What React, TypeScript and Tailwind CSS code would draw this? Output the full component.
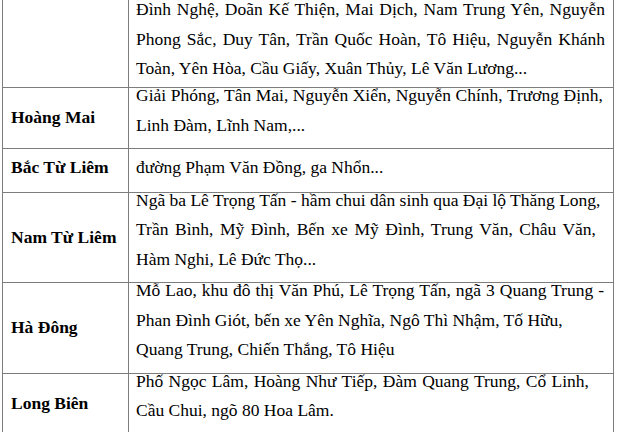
import React from "react";

type Line = { t: string; w?: string };
type Row = {
  name: string;
  lines: Line[];
  first?: boolean;
  single?: boolean;
};

const rows: Row[] = [
  {
    name: "",
    first: true,
    lines: [
      { t: "Đình Nghệ, Doãn Kế Thiện, Mai Dịch, Nam Trung Yên, Nguyễn", w: "w-[469px]" },
      { t: "Phong Sắc, Duy Tân, Trần Quốc Hoàn, Tô Hiệu, Nguyễn Khánh", w: "w-[469px]" },
      { t: "Toàn, Yên Hòa, Cầu Giấy, Xuân Thủy, Lê Văn Lương..." },
    ],
  },
  {
    name: "Hoàng Mai",
    lines: [
      { t: "Giải Phóng, Tân Mai, Nguyễn Xiển, Nguyễn Chính, Trương Định,", w: "w-[467px]" },
      { t: "Linh Đàm, Lĩnh Nam,..." },
    ],
  },
  {
    name: "Bắc Từ Liêm",
    single: true,
    lines: [{ t: "đường Phạm Văn Đồng, ga Nhổn..." }],
  },
  {
    name: "Nam Từ Liêm",
    lines: [
      { t: "Ngã ba Lê Trọng Tấn - hầm chui dân sinh qua Đại lộ Thăng Long,", w: "w-[464px]" },
      { t: "Trần Bình, Mỹ Đình, Bến xe Mỹ Đình, Trung Văn, Châu Văn,", w: "w-[460px]" },
      { t: "Hàm Nghi, Lê Đức Thọ..." },
    ],
  },
  {
    name: "Hà Đông",
    lines: [
      { t: "Mỗ Lao, khu đô thị Văn Phú, Lê Trọng Tấn, ngã 3 Quang Trung -", w: "w-[468px]" },
      { t: "Phan Đình Giót, bến xe Yên Nghĩa, Ngô Thì Nhậm, Tố Hữu,", w: "w-[423px]" },
      { t: "Quang Trung, Chiến Thắng, Tô Hiệu" },
    ],
  },
  {
    name: "Long Biên",
    lines: [
      { t: "Phố Ngọc Lâm, Hoàng Như Tiếp, Đàm Quang Trung, Cổ Linh,", w: "w-[453px]" },
      { t: "Cầu Chui, ngõ 80 Hoa Lâm." },
    ],
  },
];

function wrapClass(r: Row) {
  if (r.first) return "leading-[29.5px] -mt-[5px] mb-[3.5px]";
  if (r.single) return "leading-[29.5px] mt-[4px] mb-[9px]";
  return "leading-[29.5px] -mt-[7px] mb-[8px]";
}

export default function App() {
  return (
    <div
      className="w-[617px] h-[432px] overflow-hidden bg-white text-black text-[17.5px]"
      style={{ fontFamily: '"Liberation Serif", "Times New Roman", serif' }}
    >
      <div className="ml-[2px] w-[612px] border-l border-r border-[#7d7d7d]">
        {rows.map((r, i) => (
          <div
            key={i}
            className={
              r.first
                ? "grid grid-cols-[126px_1fr]"
                : "grid grid-cols-[126px_1fr] border-t border-[#7d7d7d]"
            }
          >
            <div className="flex items-center border-r border-[#7d7d7d] pl-[8px] font-bold">
              {r.name ? (
                <div
                  className={
                    r.single
                      ? "leading-[29.5px] mt-[4px] mb-[9px] self-start"
                      : "leading-[29.5px]"
                  }
                >
                  {r.name}
                </div>
              ) : null}
            </div>
            <div className="pl-[7px] pr-[7px]">
              <div className={wrapClass(r)}>
                {r.lines.map((l, j) => (
                  <div
                    key={j}
                    className={
                      l.w
                        ? `${l.w} whitespace-nowrap text-justify [text-align-last:justify]`
                        : "whitespace-nowrap"
                    }
                  >
                    {l.t}
                  </div>
                ))}
              </div>
            </div>
          </div>
        ))}
      </div>
    </div>
  );
}
